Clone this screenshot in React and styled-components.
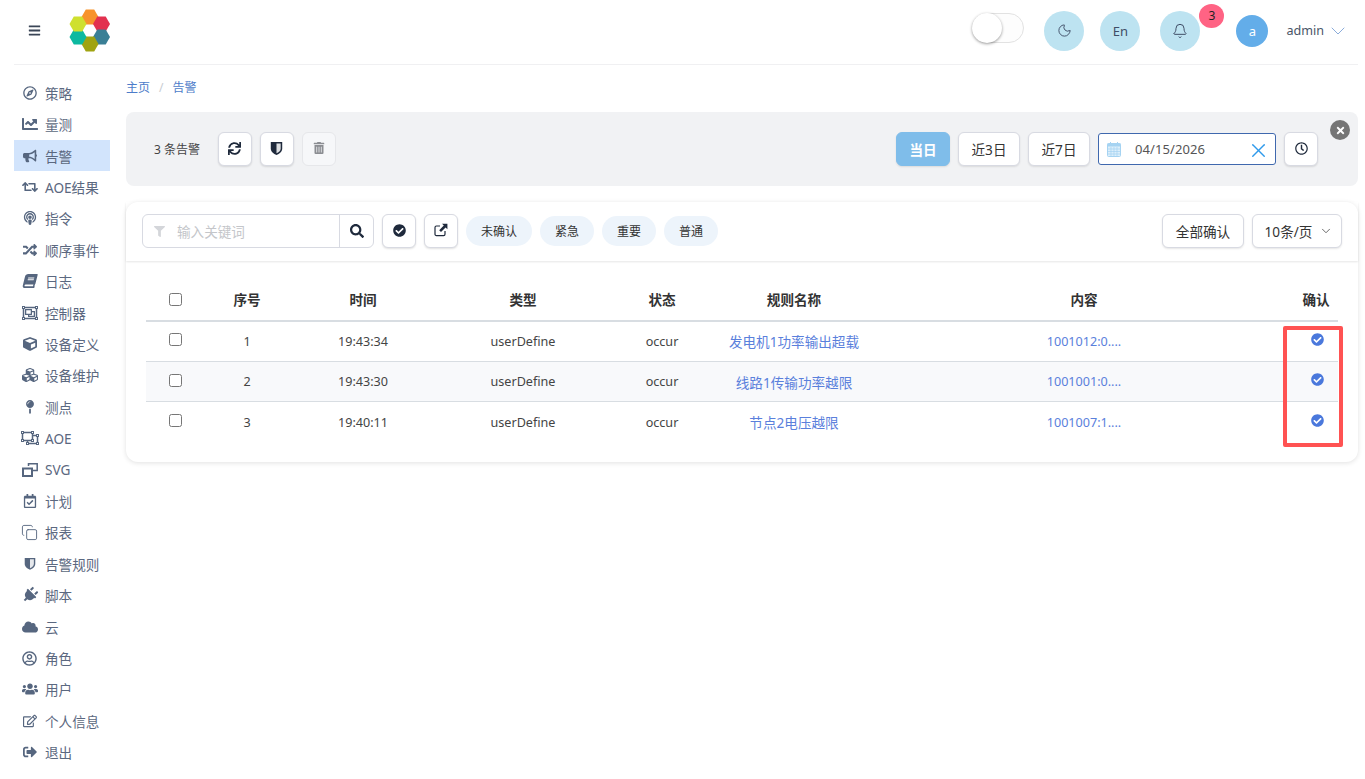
import React from 'react';
import styled, { createGlobalStyle } from 'styled-components';
import { Moon, Bell, ChevronDown, X, Copy } from 'lucide-react';
import {
  FaRegCompass, FaChartLine, FaBullhorn, FaRetweet, FaPodcast, FaRandom, FaBook, FaRegObjectGroup,
  FaCube, FaCubes, FaMapPin, FaRegObjectUngroup, FaRegCalendarCheck,
  FaPlug, FaCloud, FaRegUserCircle, FaUsers, FaRegEdit, FaSignOutAlt, FaBars, FaSync,
  FaTrashAlt, FaSearch, FaCheckCircle, FaFilter, FaRegClock, FaTimes,
} from 'react-icons/fa';

const FONT = `"Noto Sans", "Noto Sans CJK SC", sans-serif`;

const Global = createGlobalStyle`
  html, body { margin: 0; padding: 0; background: #fff; overflow: hidden; }
  body { font-family: ${FONT}; font-size: 13.6px; color: #333; }
  * { box-sizing: border-box; }
`;

const Page = styled.div`
  width: 1365px;
  height: 779px;
  padding: 0 7px 0 14px;
  overflow: hidden;
`;

const Header = styled.header`
  height: 65px;
  display: flex;
  align-items: center;
  border-bottom: 1px solid #f0f0f2;
  padding-bottom: 3px;
`;

const MenuButton = styled.span`
  display: flex;
  margin-left: 14px;
  color: #3a4556;
  font-size: 13px;
`;

const LogoMark = styled.svg`
  width: 44px;
  height: 49px;
  margin-left: 27px;
  flex: none;
`;

const Spacer = styled.div`
  flex: 1;
`;

const Toggle = styled.div`
  width: 52px;
  height: 30px;
  border: 1px solid #e2e2e2;
  border-radius: 15px;
  background: #fdfdfd;
  position: relative;
  margin: 0 20px 5px 0;
`;

const Knob = styled.span`
  position: absolute;
  left: -1px;
  top: -1px;
  width: 30px;
  height: 30px;
  border-radius: 50%;
  background: #fff;
  box-shadow: 0 1px 3px rgba(0, 0, 0, 0.4);
`;

const RoundButton = styled.div`
  width: 40px;
  height: 40px;
  border-radius: 50%;
  background: #bde3f1;
  color: #3f4d66;
  font-size: 13px;
  display: flex;
  align-items: center;
  justify-content: center;
  position: relative;
  margin-right: ${(p) => p.$gap}px;
`;

const Badge = styled.span`
  position: absolute;
  left: 39px;
  top: -7px;
  width: 25px;
  height: 24px;
  border-radius: 50%;
  background: #ff6384;
  color: #222;
  font-size: 12px;
  display: flex;
  align-items: center;
  justify-content: center;
`;

const Avatar = styled.div`
  width: 32px;
  height: 32px;
  border-radius: 50%;
  background: #63ade9;
  color: #fff;
  font-size: 13px;
  display: flex;
  align-items: center;
  justify-content: center;
  margin-right: 18px;
`;

const UserName = styled.span`
  font-size: 12.6px;
  color: #4a5568;
  margin-right: 2px;
`;

const UserCaret = styled.span`
  display: flex;
  color: #7ea3d6;
  margin-right: 8px;
`;

const Main = styled.div`
  display: flex;
  gap: 16px;
`;

const Sidebar = styled.nav`
  width: 96px;
  flex: none;
  padding-top: 12px;
`;

const NavItem = styled.div`
  height: 31.42px;
  display: flex;
  align-items: center;
  color: #5b6880;
  font-size: 13.6px;
  background: ${(p) => (p.$active ? '#d2e4fc' : 'transparent')};
  white-space: nowrap;
`;

const NavIcon = styled.span`
  width: 31px;
  display: flex;
  justify-content: center;
  font-size: ${(p) => p.$size || 14}px;
  color: #56667f;
  flex: none;
`;

const SlantBook = styled(FaBook)`
  transform: skewX(-14deg);
`;

const TiltPlug = styled(FaPlug)`
  transform: rotate(45deg);
`;

const Content = styled.main`
  flex: 1;
  min-width: 0;
  position: relative;
`;

const Breadcrumb = styled.div`
  height: 47px;
  display: flex;
  align-items: center;
  gap: 9px;
  font-size: 12px;
  color: #4d7cc9;
  padding-bottom: 3px;
`;

const Slash = styled.span`
  color: #c8ccd2;
`;

const FilterPanel = styled.section`
  height: 74px;
  background: #f1f2f4;
  border-radius: 8px;
  display: flex;
  align-items: center;
  padding: 0 40px 0 28px;
  position: relative;
`;

const CountLabel = styled.span`
  font-size: 12px;
  color: #444;
  margin-right: 18px;
`;

const Group = styled.div`
  display: flex;
  align-items: center;
  gap: 8px;
`;

const IconButton = styled.button`
  width: 34px;
  height: 34px;
  padding: 0 0 2px;
  border: 1px solid ${(p) => (p.$disabled ? '#e6e7ea' : '#d8dae2')};
  border-radius: 6px;
  background: ${(p) => (p.$disabled ? '#f6f7f9' : '#fff')};
  color: ${(p) => (p.$disabled ? '#8b8d92' : '#1f2a3c')};
  font-size: 13px;
  display: flex;
  align-items: center;
  justify-content: center;
  box-shadow: ${(p) => (p.$disabled ? 'none' : '0 1px 2px rgba(0, 0, 0, 0.12)')};
  flex: none;
`;

const TextButton = styled.button`
  height: 34px;
  padding: 0;
  width: ${(p) => p.$w}px;
  border: 1px solid ${(p) => (p.$primary ? '#7fbdea' : '#d8dae2')};
  border-radius: 6px;
  background: ${(p) => (p.$primary ? '#7fbdea' : '#fff')};
  color: ${(p) => (p.$primary ? '#fff' : '#333')};
  font-family: ${FONT};
  font-size: 13.6px;
  font-weight: ${(p) => (p.$primary ? 700 : 400)};
  display: flex;
  align-items: center;
  justify-content: center;
  gap: 7px;
  box-shadow: 0 1px 2px rgba(0, 0, 0, 0.1);
  flex: none;
`;

const DateBox = styled.div`
  width: 178px;
  height: 32px;
  border: 1px solid #3f68ae;
  border-radius: 3px;
  background: #fff;
  display: flex;
  align-items: center;
  padding: 0 5px 0 8px;
  color: #555;
  font-size: 13px;
`;

const DateIcon = styled.svg`
  width: 14px;
  height: 15px;
  margin-right: 14px;
  flex: none;
`;

const DateValue = styled.span`
  flex: 1;
  letter-spacing: 0.1px;
`;

const ClearIcon = styled.span`
  display: flex;
  color: #2f9aeb;
  transform: translateY(1px);
`;

const CloseBadge = styled.span`
  position: absolute;
  right: 8px;
  top: 8px;
  width: 20px;
  height: 20px;
  border-radius: 50%;
  background: #757575;
  color: #fff;
  font-size: 11px;
  display: flex;
  align-items: center;
  justify-content: center;
`;

const Card = styled.section`
  margin-top: 16px;
  height: 260px;
  border-radius: 12px;
  background: #fff;
  box-shadow: 0 1px 5px rgba(0, 0, 0, 0.12);
  position: relative;
`;

const CardBar = styled.div`
  height: 59px;
  display: flex;
  align-items: center;
  padding: 0 16px 1px;
  gap: 8px;
  box-shadow: 0 1px 2px rgba(0, 0, 0, 0.1);
`;

const SearchGroup = styled.div`
  display: flex;
  width: 232px;
  height: 34px;
  border: 1px solid #d8dae2;
  border-radius: 6px;
  overflow: hidden;
  flex: none;
`;

const SearchField = styled.div`
  flex: 1;
  display: flex;
  align-items: center;
  padding-left: 11px;
  gap: 12px;
  color: #c4c6ca;
  font-size: 13.6px;
`;

const FilterGlyph = styled.span`
  display: flex;
  color: #d4d6da;
  font-size: 11px;
`;

const SearchAction = styled.span`
  width: 34px;
  border-left: 1px solid #d8dae2;
  display: flex;
  align-items: center;
  justify-content: center;
  color: #1f2a3c;
  font-size: 14px;
`;

const Chip = styled.span`
  height: 30px;
  width: ${(p) => p.$w}px;
  border-radius: 15px;
  background: #edf4fb;
  color: #333;
  font-size: 12px;
  display: flex;
  align-items: center;
  justify-content: center;
  flex: none;
`;

const CaretSmall = styled.span`
  display: flex;
  color: #555;
  margin-right: -4px;
`;

const TableWrap = styled.div`
  padding: 19px 20px 0;
`;

const Table = styled.table`
  width: 1192px;
  border-collapse: collapse;
  table-layout: fixed;
`;

const HeadCell = styled.th`
  height: 41px;
  font-size: 13.6px;
  font-weight: 700;
  color: #333;
  text-align: center;
  border-bottom: 2px solid #d8dde2;
  padding: 0 0 2px;
`;

const Row = styled.tr`
  background: ${(p) => (p.$alt ? '#f8f9fb' : '#fff')};
`;

const Cell = styled.td`
  height: 40.4px;
  text-align: center;
  font-size: ${(p) => (p.$cjk ? 13.6 : 12.6)}px;
  color: ${(p) => (p.$link ? '#5a80dc' : '#444')};
  border-top: 1px solid #d8dde2;
  padding: 0;
  &:first-child { padding-bottom: 3px; }
`;

const CheckBox = styled.input.attrs({ type: 'checkbox' })`
  width: 13px;
  height: 13px;
  margin: 0;
  display: block;
  margin-left: 23px;
`;

const ConfirmIcon = styled.span`
  display: inline-flex;
  color: #4a78dc;
  font-size: 13px;
  transform: translate(1px, 0);
`;

const Highlight = styled.div`
  position: absolute;
  left: 1157px;
  top: 124px;
  width: 60px;
  height: 121px;
  border: 4px solid #ff5252;
  border-radius: 2px;
  pointer-events: none;
`;

const ShieldIcon = () => (
  <svg width="1em" height="1.1em" viewBox="0 0 13 15">
    <path d="M0.5 1 H12.5 V8 C12.5 11 9.5 13.4 6.5 14.6 C3.5 13.4 0.5 11 0.5 8 Z" fill="currentColor" />
    <path d="M6.5 2.6 H10.9 V8 C10.9 10 8.7 11.9 6.5 12.9 Z" fill="#fff" fillOpacity="0.85" />
  </svg>
);

const ExternalIcon = () => (
  <svg width="14" height="14" viewBox="0 0 14 14">
    <path d="M11 8 V11.2 C11 12 10.4 12.6 9.6 12.6 H2.4 C1.6 12.6 1 12 1 11.2 V4.4 C1 3.6 1.6 3 2.4 3 H6" fill="none" stroke="currentColor" strokeWidth="1.2" />
    <path d="M8 0.8 H13.4 V6.2 L11.6 4.4 L7 9 L5.2 7.2 L9.8 2.6 Z" fill="currentColor" />
  </svg>
);

const RestoreGlyph = () => (
  <svg width="16" height="14" viewBox="0 0 16 14">
    <path d="M6.5 3 V0.8 H15.2 V7.6 H10.5" fill="none" stroke="currentColor" strokeWidth="1.5" />
    <rect x="1" y="5.5" width="9" height="7.5" fill="none" stroke="currentColor" strokeWidth="2" />
  </svg>
);

const CalendarGlyph = () => (
  <DateIcon viewBox="0 0 14 15">
    <rect x="0.5" y="1.5" width="13" height="13" rx="1" fill="#dcefFb" stroke="#a5d3f2" />
    <rect x="0.5" y="1.5" width="13" height="3" fill="#a5d3f2" />
    <path d="M3.5 0 V3 M10.5 0 V3" stroke="#a5d3f2" />
    <path d="M1 7 H13 M1 9.5 H13 M1 12 H13 M4 5 V14 M7 5 V14 M10 5 V14" stroke="#a5d3f2" strokeWidth="0.7" />
  </DateIcon>
);

const CopyGlyph = () => <Copy size={17} strokeWidth={1.3} />;

const NAV = [
  { Icon: FaRegCompass, label: '策略' },
  { Icon: FaChartLine, label: '量测', size: 16 },
  { Icon: FaBullhorn, label: '告警', active: true },
  { Icon: FaRetweet, label: 'AOE结果', size: 16 },
  { Icon: FaPodcast, label: '指令' },
  { Icon: FaRandom, label: '顺序事件' },
  { Icon: SlantBook, label: '日志' },
  { Icon: FaRegObjectGroup, label: '控制器', size: 16 },
  { Icon: FaCube, label: '设备定义' },
  { Icon: FaCubes, label: '设备维护', size: 16 },
  { Icon: FaMapPin, label: '测点' },
  { Icon: FaRegObjectUngroup, label: 'AOE', size: 18 },
  { Icon: RestoreGlyph, label: 'SVG' },
  { Icon: FaRegCalendarCheck, label: '计划' },
  { Icon: CopyGlyph, label: '报表' },
  { Icon: ShieldIcon, label: '告警规则', size: 12 },
  { Icon: TiltPlug, label: '脚本', size: 16 },
  { Icon: FaCloud, label: '云', size: 16 },
  { Icon: FaRegUserCircle, label: '角色', size: 15 },
  { Icon: FaUsers, label: '用户', size: 16 },
  { Icon: FaRegEdit, label: '个人信息' },
  { Icon: FaSignOutAlt, label: '退出' },
];

const COLS = [58, 86, 146, 174, 104, 160, 420, 44];
const HEADS = ['序号', '时间', '类型', '状态', '规则名称', '内容', '确认'];
const ROWS = [
  ['1', '19:43:34', 'userDefine', 'occur', '发电机1功率输出超载', '1001012:0....'],
  ['2', '19:43:30', 'userDefine', 'occur', '线路1传输功率越限', '1001001:0....'],
  ['3', '19:40:11', 'userDefine', 'occur', '节点2电压越限', '1001007:1....'],
];

const HEXES = [
  [22, 11, '#f7932b'], [33.5, 18, '#e2314f'], [33.5, 31, '#3a7f95'],
  [22, 38, '#a0a311'], [10, 31, '#0cb9a0'], [10, 18, '#cfe02f'],
];
const hexPoints = (x, y) =>
  [[-8.5, 0], [-4.2, -7.4], [4.2, -7.4], [8.5, 0], [4.2, 7.4], [-4.2, 7.4]]
    .map(([a, b]) => `${x + a},${y + b}`)
    .join(' ');

export default function App() {
  return (
    <Page>
      <Global />
      <Header>
        <MenuButton><FaBars /></MenuButton>
        <LogoMark viewBox="0 0 44 49">
          {HEXES.map(([x, y, c]) => <polygon key={c} points={hexPoints(x, y)} fill={c} />)}
        </LogoMark>
        <Spacer />
        <Toggle><Knob /></Toggle>
        <RoundButton $gap={16}><Moon size={15} strokeWidth={1.5} /></RoundButton>
        <RoundButton $gap={20}>En</RoundButton>
        <RoundButton $gap={36}>
          <Bell size={16} strokeWidth={1.5} />
          <Badge>3</Badge>
        </RoundButton>
        <Avatar>a</Avatar>
        <UserName>admin</UserName>
        <UserCaret><ChevronDown size={24} strokeWidth={0.9} /></UserCaret>
      </Header>
      <Main>
        <Sidebar>
          {NAV.map(({ Icon, label, active, size }) => (
            <NavItem key={label} $active={active}>
              <NavIcon $size={size}><Icon /></NavIcon>
              {label}
            </NavItem>
          ))}
        </Sidebar>
        <Content>
          <Breadcrumb>
            <span>主页</span>
            <Slash>/</Slash>
            <span>告警</span>
          </Breadcrumb>
          <FilterPanel>
            <CountLabel>3 条告警</CountLabel>
            <Group>
              <IconButton><FaSync /></IconButton>
              <IconButton><ShieldIcon /></IconButton>
              <IconButton $disabled><FaTrashAlt size={12} /></IconButton>
            </Group>
            <Spacer />
            <Group>
              <TextButton $primary $w={54}>当日</TextButton>
              <TextButton $w={62}>近3日</TextButton>
              <TextButton $w={62}>近7日</TextButton>
              <DateBox>
                <CalendarGlyph />
                <DateValue>04/15/2026</DateValue>
                <ClearIcon><X size={23} strokeWidth={1.5} /></ClearIcon>
              </DateBox>
              <IconButton><FaRegClock size={13} /></IconButton>
            </Group>
            <CloseBadge><FaTimes /></CloseBadge>
          </FilterPanel>
          <Card>
            <CardBar>
              <SearchGroup>
                <SearchField>
                  <FilterGlyph><FaFilter /></FilterGlyph>
                  输入关键词
                </SearchField>
                <SearchAction><FaSearch /></SearchAction>
              </SearchGroup>
              <IconButton><FaCheckCircle /></IconButton>
              <IconButton><ExternalIcon /></IconButton>
              <Chip $w={66}>未确认</Chip>
              <Chip $w={54}>紧急</Chip>
              <Chip $w={54}>重要</Chip>
              <Chip $w={54}>普通</Chip>
              <Spacer />
              <TextButton $w={82}>全部确认</TextButton>
              <TextButton $w={90}>
                10条/页
                <CaretSmall><ChevronDown size={14} strokeWidth={1.5} /></CaretSmall>
              </TextButton>
            </CardBar>
            <TableWrap>
              <Table>
                <colgroup>
                  {COLS.map((w, i) => <col key={i} style={{ width: w }} />)}
                </colgroup>
                <thead>
                  <tr>
                    <HeadCell><CheckBox /></HeadCell>
                    {HEADS.map((h) => <HeadCell key={h}>{h}</HeadCell>)}
                  </tr>
                </thead>
                <tbody>
                  {ROWS.map((r, i) => (
                    <Row key={r[0]} $alt={i === 1}>
                      <Cell><CheckBox /></Cell>
                      <Cell>{r[0]}</Cell>
                      <Cell>{r[1]}</Cell>
                      <Cell>{r[2]}</Cell>
                      <Cell>{r[3]}</Cell>
                      <Cell $link $cjk>{r[4]}</Cell>
                      <Cell $link>{r[5]}</Cell>
                      <Cell><ConfirmIcon><FaCheckCircle /></ConfirmIcon></Cell>
                    </Row>
                  ))}
                </tbody>
              </Table>
            </TableWrap>
            <Highlight />
          </Card>
        </Content>
      </Main>
    </Page>
  );
}
